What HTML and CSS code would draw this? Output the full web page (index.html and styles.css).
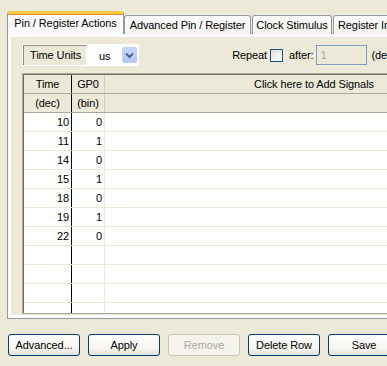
FILE: index.html
```html
<!DOCTYPE html>
<html>
<head>
    <title>Stimulus</title>
    <link rel="stylesheet" href="styles.css">
</head>
<body>
    <div class="window">
        <div class="tabs">
            <div class="tab active tab-pin">Pin / Register Actions</div>
            <div class="tab tab-adv">Advanced Pin / Register</div>
            <div class="tab tab-clock">Clock Stimulus</div>
            <div class="tab tab-reg">Register Injection</div>
        </div>

        <div class="panel">
            <div class="panel-inner">
                <div class="toolbar">
                    <div class="units">
                        <div class="units-label">Time Units</div>
                        <div class="units-select">
                            <span class="units-value">us</span>
                            <span class="drop-btn">
                                <svg width="9" height="7" viewBox="0 0 9 7"><path d="M1 1.5 L4.5 5 L8 1.5" fill="none" stroke="#4d6185" stroke-width="2"/></svg>
                            </span>
                        </div>
                    </div>
                    <div class="repeat">
                        <span>Repeat</span>
                        <span class="checkbox"></span>
                        <span class="after-label">after:</span>
                        <span class="after-input">1</span>
                        <span class="dec">(dec)</span>
                    </div>
                </div>

                <div class="grid">
                    <div class="row head">
                        <div class="cell c-time">Time</div>
                        <div class="cell c-gp">GP0</div>
                        <div class="cell c-rest">Click here to Add Signals</div>
                    </div>
                    <div class="row head">
                        <div class="cell c-time">(dec)</div>
                        <div class="cell c-gp">(bin)</div>
                        <div class="cell c-rest"></div>
                    </div>
                    <div class="row"><div class="cell c-time">10</div><div class="cell c-gp">0</div><div class="cell c-rest"></div></div>
                    <div class="row"><div class="cell c-time">11</div><div class="cell c-gp">1</div><div class="cell c-rest"></div></div>
                    <div class="row"><div class="cell c-time">14</div><div class="cell c-gp">0</div><div class="cell c-rest"></div></div>
                    <div class="row"><div class="cell c-time">15</div><div class="cell c-gp">1</div><div class="cell c-rest"></div></div>
                    <div class="row"><div class="cell c-time">18</div><div class="cell c-gp">0</div><div class="cell c-rest"></div></div>
                    <div class="row"><div class="cell c-time">19</div><div class="cell c-gp">1</div><div class="cell c-rest"></div></div>
                    <div class="row"><div class="cell c-time">22</div><div class="cell c-gp">0</div><div class="cell c-rest"></div></div>
                    <div class="row"><div class="cell c-time"></div><div class="cell c-gp"></div><div class="cell c-rest"></div></div>
                    <div class="row"><div class="cell c-time"></div><div class="cell c-gp"></div><div class="cell c-rest"></div></div>
                    <div class="row"><div class="cell c-time"></div><div class="cell c-gp"></div><div class="cell c-rest"></div></div>
                    <div class="row"><div class="cell c-time"></div><div class="cell c-gp"></div><div class="cell c-rest"></div></div>
                </div>
            </div>
        </div>

        <div class="buttons">
            <button class="xp-button">Advanced...</button>
            <button class="xp-button">Apply</button>
            <button class="xp-button" disabled>Remove</button>
            <button class="xp-button">Delete Row</button>
            <button class="xp-button">Save</button>
        </div>
    </div>
</body>
</html>
```

FILE: styles.css
```css
body {
    margin: 0;
    background: #ece9d8;
    font-family: "Liberation Sans", Arial, sans-serif;
    font-size: 11px;
    letter-spacing: -0.1px;
    color: #000;
    overflow: hidden;
}

.window {
    width: 387px;
    height: 366px;
    overflow: hidden;
}

.tabs {
    display: flex;
    align-items: flex-end;
    padding: 11px 0 0 7px;
    margin-bottom: -1px;
    position: relative;
    z-index: 1;
    white-space: nowrap;
}

.tab {
    height: 18px;
    line-height: 18px;
    margin-right: 1px;
    border: 1px solid #919b9c;
    border-bottom: none;
    border-radius: 3px 3px 0 0;
    background: linear-gradient(#fefefe, #f4f3ee);
    flex-shrink: 0;
    box-sizing: content-box;
    text-align: center;
    overflow: hidden;
}

.tab-pin { width: 115px; }
.tab-adv { width: 125px; }
.tab-clock { width: 78px; margin-right: 1px; }
.tab-reg { width: 90px; text-align: left; padding-left: 4px; }

.tab.active {
    height: 19px;
    line-height: 19px;
    margin-right: 0;
    background: #fcfcfe;
    border-top: 3px solid #ffc83c;
    box-shadow: inset 0 1px 0 #e68b2c;
    padding-bottom: 1px;
}

.panel {
    margin-left: 7px;
    width: 430px;
    border: 1px solid #919b9c;
    background: #fcfcfe;
    padding: 3px;
}

.panel-inner {
    background: #ece9d8;
    padding: 7px 0 1px 11px;
}

.toolbar {
    display: flex;
    align-items: center;
    height: 22px;
    margin-bottom: 7px;
}

.units {
    display: flex;
    border: 1px solid #fff;
    height: 20px;
}

.units-label {
    padding: 0 5px 0 6px;
    line-height: 18px;
    border-top: 1px solid #8d8b80;
    border-left: 1px solid #8d8b80;
    border-right: 1px solid #fff;
}

.units-select {
    display: flex;
    align-items: center;
    background: #fff;
    width: 50px;
    padding-right: 1px;
}

.units-value {
    flex: 1;
    text-align: center;
    padding-top: 1px;
}

.drop-btn {
    width: 15px;
    height: 16px;
    background: linear-gradient(#c6d7fc, #b1c6f6);
    border: 1px solid #b9cdf6;
    border-radius: 2px;
    box-sizing: border-box;
    display: flex;
    align-items: center;
    justify-content: center;
}

.repeat {
    display: flex;
    align-items: center;
    margin-left: 93px;
    white-space: nowrap;
}

.checkbox {
    width: 11px;
    height: 11px;
    border: 1px solid #1c5180;
    background: linear-gradient(135deg, #dcdcd7, #fff);
    margin: 1px 6px 0 3px;
    flex-shrink: 0;
}

.after-label {
    margin-right: 2px;
}

.after-input {
    width: 45px;
    height: 18px;
    line-height: 18px;
    border: 1px solid #7f9db9;
    padding-left: 4px;
    color: #aca899;
    margin-right: 5px;
    flex-shrink: 0;
}

.grid {
    height: 241px;
    box-sizing: border-box;
    overflow: hidden;
    background: #fff;
    border-top: 1px solid #aca899;
    border-left: 1px solid #aca899;
    border-bottom: 1px solid #aca899;
    box-shadow: inset 1px 1px 0 #716f64;
    padding: 1px 0 0 1px;
}

.row {
    display: flex;
    height: 19px;
    box-sizing: border-box;
    border-bottom: 1px solid #ebe8d8;
}

.row.head {
    background: #ece9d8;
    border-bottom: 1px solid #aca899;
}

.cell {
    line-height: 18px;
    box-sizing: border-box;
    flex-shrink: 0;
}

.c-time {
    width: 48px;
    border-right: 1px solid #000;
    text-align: right;
    padding-right: 2px;
}

.c-gp {
    width: 33px;
    border-right: 1px solid #ebe8d8;
    text-align: right;
    padding-right: 2px;
}

.row.head .c-time,
.row.head .c-gp {
    text-align: center;
    padding: 0;
}

.row.head .c-gp {
    border-right: 1px solid #d2cfbf;
}

.c-rest {
    width: 418px;
    text-align: center;
}

.buttons {
    display: flex;
    gap: 8px;
    padding: 15px 0 0 8px;
}

.xp-button {
    width: 72px;
    height: 22px;
    flex-shrink: 0;
    font-family: "Liberation Sans", Arial, sans-serif;
    font-size: 11px;
    letter-spacing: -0.1px;
    color: #000;
    border: 1px solid #003c74;
    border-radius: 3px;
    background: linear-gradient(#ffffff, #f5f4ef 70%, #e3e0d6);
    padding: 0;
}

.xp-button:disabled {
    border-color: #c9c7ba;
    background: #f5f4ea;
    color: #aca899;
}
```
